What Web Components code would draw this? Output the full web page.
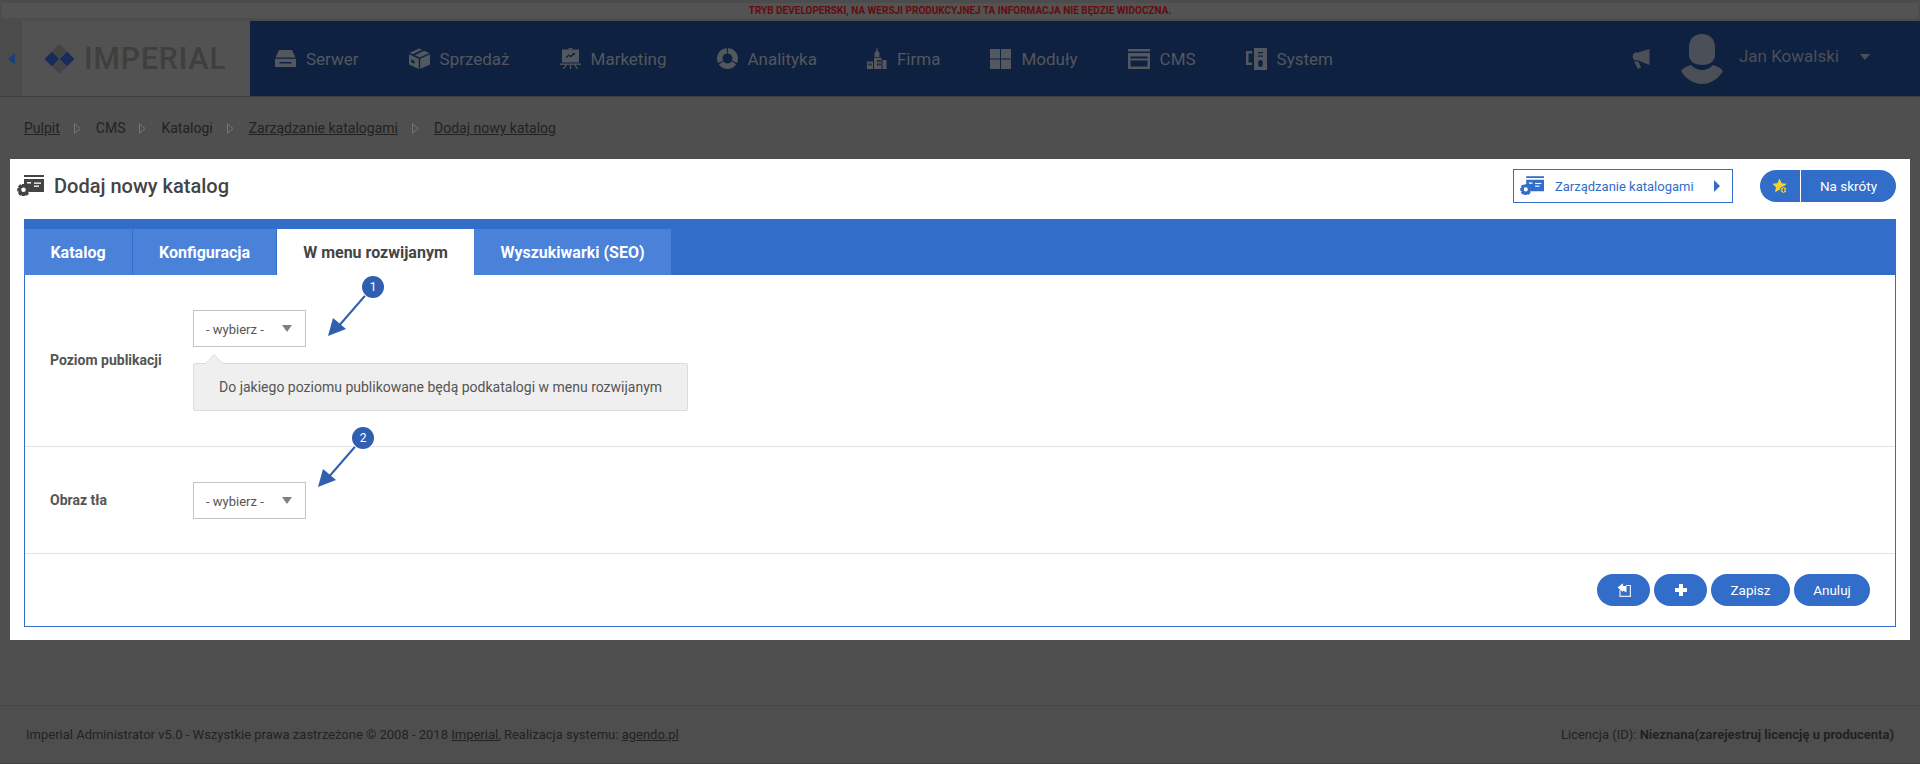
<!DOCTYPE html>
<html lang="pl">
<head>
<meta charset="utf-8">
<title>Imperial Administrator</title>
<style>
  html, body { margin: 0; height: 100%; }
  body {
    height: 764px;
    overflow: hidden;
    display: flex;
    flex-direction: column;
    background: #4f4f4f;
    font-family: Roboto, "Liberation Sans", sans-serif;
  }
</style>
</head>
<body>
  <dev-notice>Tryb developerski, na wersji produkcyjnej ta informacja nie będzie widoczna.</dev-notice>
  <app-header></app-header>
  <app-breadcrumbs></app-breadcrumbs>
  <catalog-panel></catalog-panel>
  <app-footer></app-footer>

<script>
const colors = {
  blue: "#316dc9",
  tab: "#4a81d9",
  navy: "#0f2140",
  navText: "#53575e",
  userText: "#4b4f57",
  text: "#444"
};

// catalog icon is used both in the title and in the link button
const catalogIcon = `
  <svg viewBox="0 0 27 24" width="27" height="24" fill="currentColor">
    <rect x="7" y="1" width="20" height="2"/>
    <path d="M7 5h20v13H12.500a6 6 0 0 0-5.500-5.500z"/>
    <rect x="10" y="8" width="4" height="1.500" fill="#fff"/>
    <rect x="17" y="8.500" width="7" height="1.300" fill="#fff"/>
    <rect x="17" y="11.500" width="5" height="1.300" fill="#fff"/>
    <path fill-rule="evenodd" d="M5 13h3l.4 1.700 1.500-.9 2.100 2.100-.9 1.500 1.700.4v3l-1.700.4.900 1.500-2.100 2.100-1.500-.9-.4 1.100H5l-.4-1.100-1.500.9L1 22.200l.9-1.500L.2 20.300v-3l1.700-.4-.9-1.500 2.100-2.100 1.500.9zM6.500 16.500a2.300 2.300 0 1 0 0 4.600 2.300 2.300 0 0 0 0-4.600z" transform="translate(0 -3)"/>
  </svg>`;

const navIcons = {
  server: `<svg viewBox="0 0 21 17" width="21" height="17" fill="currentColor">
    <path d="M4 0h13l3.500 7.500H.5z"/>
    <path fill-rule="evenodd" d="M0 8.700h21V17H0zM4.500 12v1.500h12V12z"/></svg>`,
  box: `<svg viewBox="0 0 21 21" width="21" height="21" fill="currentColor">
    <path d="M10 .5l3 1.300-9.200 4.500L.5 4.800z"/>
    <path d="M15 2.700l5.500 2.300-9.700 4.500-5-2.300z"/>
    <path fill-rule="evenodd" d="M0 6.200l9.800 4.500V21L0 16.500zM2.300 11.500v2.700l3.200 1.500V13z"/>
    <path d="M21 6.200v10.300L11.200 21V10.700z"/></svg>`,
  board: `<svg viewBox="0 0 21 21" width="21" height="21" fill="currentColor">
    <rect x="8.500" y="0" width="4" height="1.500"/>
    <path fill-rule="evenodd" d="M2 1.500h17V14.500H2zM5.500 9.500l.8.8 2.400-2.200 2 1.500 3.500-3 .8.800V5h-3l.9.800-2.300 2-2-1.500z"/>
    <rect x="0" y="15.500" width="21" height="1.400"/>
    <path d="M9.900 16.900h1.200V21H9.900zM5.500 16.900h1.500L4 21H2.500zM14 16.900h1.500l3 4.100H17z"/></svg>`,
  chart: `<svg viewBox="0 0 21 21" width="21" height="21">
    <circle cx="10.500" cy="10.500" r="7.700" fill="none" stroke="currentColor" stroke-width="5.600"
      pathLength="100" stroke-dasharray="31 2.300" transform="rotate(-86 10.500 10.500)"/></svg>`,
  city: `<svg viewBox="0 0 20 21" width="20" height="21" fill="currentColor">
    <path d="M9.600 0h.8l.4 3 1.700 2v4h-5V5l1.700-2z"/>
    <path fill-rule="evenodd" d="M7 9.800h7.500V21H7zM10 12v2h1.500v-2zM12.200 12v2h1.500v-2zM10 15.500v2h1.500v-2zM12.200 15.500v2h1.500v-2z"/>
    <path fill-rule="evenodd" d="M0 13.500h6V21H0zM1.500 15.500v2h1.300v-2zM3.500 15.500v2h1.300v-2z"/>
    <rect x="15.500" y="12" width="4" height="9"/></svg>`,
  grid: `<svg viewBox="0 0 21 20" width="21" height="20" fill="currentColor">
    <rect x="0" y="0" width="10" height="9.500"/><rect x="11" y="0" width="10" height="9.500"/>
    <rect x="0" y="10.500" width="10" height="9.500"/><rect x="11" y="10.500" width="10" height="9.500"/></svg>`,
  cms: `<svg viewBox="0 0 22 20" width="22" height="20" fill="currentColor">
    <rect x="0" y="0" width="22" height="2.500"/>
    <path fill-rule="evenodd" d="M0 4h22v16H0zM2.500 7.500v2h17v-2zM2.500 11.500v6h17v-6z"/></svg>`,
  system: `<svg viewBox="0 0 21 22" width="21" height="22" fill="currentColor">
    <path d="M0 3h6v2.500H2.500v9H6V17H0z"/>
    <path fill-rule="evenodd" d="M8 0h13v22H8zM12 4v1.300h5V4zM12 7.500v1.300h5V7.500zM14.500 12a2.300 2.300 0 0 0-2.300 2.300v2.400a2.300 2.300 0 0 0 4.600 0v-2.400a2.300 2.300 0 0 0-2.300-2.300z"/></svg>`
};

class DevNotice extends HTMLElement {
  constructor() {
    super();
    this.attachShadow({ mode: "open" }).innerHTML = /*html*/ `
    <style>
      :host { display: block; height: 21px; box-sizing: border-box; padding: 3px 2px 3px 2px; background: #4c4c4c; }
      div {
        height: 15px; background: #535353; text-align: center;
        font: 700 10px/15px Roboto, sans-serif; color: #650d0d; text-transform: uppercase;
      }
    </style>
    <div><slot></slot></div>`;
  }
}

class NavItem extends HTMLElement {
  constructor() {
    super();
    this.attachShadow({ mode: "open" }).innerHTML = /*html*/ `
    <style>
      :host { display: flex; align-items: center; gap: 10px; font-size: 17px; color: ${colors.navText}; }
      svg { display: block; }
    </style>
    ${navIcons[this.getAttribute("icon")]}
    <slot></slot>`;
  }
}

class AppHeader extends HTMLElement {
  constructor() {
    super();
    this.attachShadow({ mode: "open" }).innerHTML = /*html*/ `
    <style>
      :host { display: flex; height: 75px; background: ${colors.navy}; border-bottom: 1px solid #3c3c3c; box-sizing: content-box; }
      .toggle { width: 22px; background: #4b4b4b; display: flex; align-items: center; justify-content: center; }
      .toggle i { border: solid transparent; border-width: 6px 7px 6px 0; border-right-color: #1c3f78; }
      .logo {
        width: 228px; background: #525252; display: flex; align-items: center; gap: 9px; padding-left: 22px; box-sizing: border-box;
        font: 500 31px/1 Roboto, sans-serif; color: #3f3f3d; letter-spacing: 1px;
      }
      .logo svg { display: block; }
      .logo span { transform: scaleX(.97); transform-origin: left center; }
      nav { flex: 1; display: flex; align-items: center; gap: 50px; padding-left: 25px; }
      .user { display: flex; align-items: center; padding-right: 50px; color: ${colors.userText}; font-size: 17px; }
      .user .mega { margin-right: 31px; display: block; margin-top: 2px; }
      .user .avatar { margin-right: 16px; display: block; }
      .user .name { margin-top: -5px; }
      .user i { margin: -4px 0 0 21px; border: solid transparent; border-width: 6px 5px 0 5px; border-top-color: ${colors.userText}; }
    </style>
    <div class="toggle"><i></i></div>
    <div class="logo">
      <svg viewBox="0 0 31 30" width="31" height="30">
        <path d="M8 7.500l7.300 7.500L8 22.500.5 15z" fill="#172c58"/>
        <path d="M23 7.500l7.500 7.500-7.500 7.500-7.300-7.500z" fill="#172c58"/>
        <path d="M15.500 0l7.300 7.300-7.300 7.300-7.300-7.300z" fill="#444"/>
        <path d="M15.500 15.400l7.300 7.300-7.300 7.300-7.300-7.300z" fill="#444"/>
      </svg>
      <span>IMPERIAL</span>
    </div>
    <nav>
      <nav-item icon="server">Serwer</nav-item>
      <nav-item icon="box">Sprzedaż</nav-item>
      <nav-item icon="board">Marketing</nav-item>
      <nav-item icon="chart">Analityka</nav-item>
      <nav-item icon="city">Firma</nav-item>
      <nav-item icon="grid">Moduły</nav-item>
      <nav-item icon="cms">CMS</nav-item>
      <nav-item icon="system">System</nav-item>
    </nav>
    <div class="user">
      <svg class="mega" viewBox="0 0 21 21" width="21" height="21" fill="${colors.userText}">
        <path d="M20.500 0v16L9 11.500H6A4.500 4.500 0 0 1 6 3.500h3z"/>
        <path d="M5 12.500h4.500l2.500 6-3 1.500z"/>
      </svg>
      <svg class="avatar" viewBox="0 0 42 50" width="42" height="50" fill="${colors.userText}">
        <path d="M21 0c7.500 0 13 5 13 13v8c0 6-5 10-13 10s-13-4-13-10v-8C8 5 13.500 0 21 0z"/>
        <path d="M10 31c3 3.500 7 5 11 5s8-1.500 11-5c4 1 8 3 10 6-4.500 7.500-12 13-21 13S4.500 44.500 0 37c2-3 6-5 10-6z"/>
      </svg>
      <span class="name">Jan Kowalski</span>
      <i></i>
    </div>`;
  }
}

class AppBreadcrumbs extends HTMLElement {
  constructor() {
    super();
    const items = [
      ["Pulpit", true], ["CMS", false], ["Katalogi", false],
      ["Zarządzanie katalogami", true], ["Dodaj nowy katalog", true]
    ];
    this.attachShadow({ mode: "open" }).innerHTML = /*html*/ `
    <style>
      :host { display: flex; align-items: center; height: 62px; padding-left: 24px; font-size: 14px; color: #222; }
      a { color: inherit; text-decoration: underline; }
      i { margin: 0 15px 0 14px; width: 7px; height: 11px; }
      i svg { display: block; }
    </style>
    ${items.map(([label, link], idx) => `
      ${idx ? `<i><svg viewBox="0 0 7 11" width="7" height="11"><path d="M.5.800L6.200 5.500.5 10.200z" fill="none" stroke="#757575"/></svg></i>` : ""}
      ${link ? `<a>${label}</a>` : `<span>${label}</span>`}
    `).join("")}`;
  }
}

class SelectBox extends HTMLElement {
  constructor() {
    super();
    this.attachShadow({ mode: "open" }).innerHTML = /*html*/ `
    <style>
      :host {
        display: flex; align-items: center; justify-content: space-between;
        width: 113px; height: 37px; box-sizing: border-box; padding: 0 13px 0 12px;
        border: 1px solid #c4c4c4; background: #fff; font-size: 13px; color: #555;
      }
      span { margin-top: 2px; }
      i { border: solid transparent; border-width: 7px 5.500px 0 5.500px; border-top-color: #808080; margin-top: -1px; }
    </style>
    <span><slot></slot></span><i></i>`;
  }
}

class HintBox extends HTMLElement {
  constructor() {
    super();
    this.attachShadow({ mode: "open" }).innerHTML = /*html*/ `
    <style>
      :host {
        display: block; position: relative; width: 495px; height: 48px; box-sizing: border-box;
        margin-top: 16px; padding: 0 25px; line-height: 46px;
        background: #efefef; border: 1px solid #dcdcdc; border-radius: 2px;
        font-size: 14px; color: #555; white-space: nowrap;
      }
      svg { position: absolute; left: 11px; top: -10px; display: block; }
    </style>
    <svg viewBox="0 0 18 10" width="18" height="10"><path d="M0 10L9 .5 18 10" fill="#efefef" stroke="#dcdcdc"/></svg>
    <slot></slot>`;
  }
}

class FormRow extends HTMLElement {
  constructor() {
    super();
    this.attachShadow({ mode: "open" }).innerHTML = /*html*/ `
    <style>
      :host {
        display: flex; align-items: center; padding: 35px 25px 35px 25px;
        border-bottom: 1px solid #e2e2e2;
      }
      :host([compact]) { padding-bottom: 34px; }
      .label { width: 143px; flex: none; margin-top: -2px; font-size: 14px; font-weight: 700; color: #555; }
    </style>
    <div class="label">${this.getAttribute("label")}</div>
    <div class="field"><slot></slot></div>`;
  }
}

// numbered badge with an arrow drawn over the form, its place is its content
class CalloutArrow extends HTMLElement {
  constructor() {
    super();
    this.attachShadow({ mode: "open" }).innerHTML = /*html*/ `
    <style>
      :host {
        position: absolute; display: block; width: 60px; height: 64px;
        left: ${this.getAttribute("x")}px; top: ${this.getAttribute("y")}px;
      }
      svg { display: block; }
      span {
        position: absolute; right: 1px; top: 0; width: 22px; height: 22px; border-radius: 50%;
        background: #2f5fae; color: #fff; font-size: 12px; line-height: 22px; text-align: center;
        box-shadow: 0 0 0 1px #fff;
      }
    </style>
    <svg viewBox="0 0 60 64" width="60" height="64">
      <path d="M45 14L12 52" stroke="#2f5fae" stroke-width="2"/>
      <path d="M3 60L8 42 21 53z" fill="#2f5fae"/>
    </svg>
    <span><slot></slot></span>`;
  }
}

class PillButton extends HTMLElement {
  constructor() {
    super();
    this.attachShadow({ mode: "open" }).innerHTML = /*html*/ `
    <style>
      :host {
        display: flex; align-items: center; justify-content: center;
        height: 32px; border-radius: 16px; background: ${colors.blue};
        color: #fff; font-size: 13.500px; box-sizing: border-box;
      }
    </style>
    <slot></slot>`;
  }
}

class CatalogPanel extends HTMLElement {
  constructor() {
    super();
    this.attachShadow({ mode: "open" }).innerHTML = /*html*/ `
    <style>
      :host { display: block; margin: 0 10px; height: 481px; background: #fff; box-sizing: border-box; padding: 0 14px 13px; }
      .head { display: flex; align-items: center; height: 60px; padding-bottom: 6px; box-sizing: border-box; color: ${colors.text}; margin-left: -7px; }
      .head h1 { margin: 0 0 0 10px; font-size: 20px; font-weight: 500; flex: 1; }
      .head svg { display: block; }
      .link {
        display: flex; align-items: center; width: 220px; height: 34px; box-sizing: border-box;
        border: 1px solid ${colors.blue}; color: ${colors.blue}; font-size: 13px; padding-left: 6px; margin-right: 27px;
      }
      .link svg { width: 24px; height: 22px; }
      .link span { margin-left: 11px; flex: 1; }
      .link i { border: solid transparent; border-width: 6px 0 6px 6px; border-left-color: ${colors.blue}; margin-right: 12px; }
      .shortcut {
        display: flex; align-items: center; width: 136px; height: 32px; border-radius: 16px;
        background: ${colors.blue}; color: #fff; font-size: 13.500px; overflow: hidden;
      }
      .shortcut .star { width: 40px; height: 100%; display: flex; align-items: center; justify-content: center; border-right: 1px solid #fff; box-sizing: content-box; }
      .shortcut .lab { flex: 1; text-align: center; padding-left: 3px; padding-right: 3px; }
      .box { position: relative; height: 408px; box-sizing: border-box; border: 1px solid ${colors.blue}; }
      .tabs { display: flex; height: 56px; margin: -1px -1px 0; padding-top: 10px; box-sizing: border-box; background: ${colors.blue}; padding-left: 0; }
      .tabs a {
        display: flex; align-items: center; justify-content: center; height: 46px;
        background: ${colors.tab}; color: #fff; font-size: 16px; font-weight: 700; box-sizing: border-box;
        border-right: 1px solid ${colors.blue};
      }
      .tabs a.on { background: #fff; color: ${colors.text}; border-right: 0; }
      .actions { display: flex; justify-content: flex-end; gap: 4px; padding: 20px 25px 0 0; }
    </style>
    <div class="head">
      ${catalogIcon}
      <h1>Dodaj nowy katalog</h1>
      <div class="link">${catalogIcon}<span>Zarządzanie katalogami</span><i></i></div>
      <div class="shortcut">
        <div class="star">
          <svg viewBox="0 0 16 16" width="16" height="16">
            <path d="M7.500.500l2.200 4.700 5 .6-3.700 3.500 1 5-4.500-2.500L3 14.300l1-5L.3 5.800l5-.6z" fill="#f5d327"/>
            <circle cx="11.500" cy="12" r="3.300" fill="#f5d327" stroke="${colors.blue}"/>
            <path d="M11.500 10v4M9.500 12h4" stroke="${colors.blue}"/>
          </svg>
        </div>
        <div class="lab">Na skróty</div>
      </div>
    </div>
    <div class="box">
      <div class="tabs">
        <a style="width:109px">Katalog</a>
        <a style="width:144px">Konfiguracja</a>
        <a class="on" style="width:197px">W menu rozwijanym</a>
        <a style="width:197px;border-right:0">Wyszukiwarki (SEO)</a>
      </div>
      <form-row label="Poziom publikacji">
        <select-box>- wybierz -</select-box>
        <hint-box>Do jakiego poziomu publikowane będą podkatalogi w menu rozwijanym</hint-box>
      </form-row>
      <form-row label="Obraz tła" compact>
        <select-box>- wybierz -</select-box>
      </form-row>
      <div class="actions">
        <pill-button style="width:53px">
          <svg viewBox="0 0 14 14" width="14" height="14">
            <path d="M3 7v6.400h10.400V2.500H9" fill="none" stroke="#e4e8f8" stroke-width="1.200"/>
            <path d="M.5 4.500L6 .2v2.800h3.500V9.500L6 7.500V9z" fill="#fff"/>
          </svg>
        </pill-button>
        <pill-button style="width:53px">
          <svg viewBox="0 0 14 14" width="14" height="14"><path d="M5 1h4v4h4v4H9v4H5V9H1V5h4z" fill="#fff"/></svg>
        </pill-button>
        <pill-button style="width:79px">Zapisz</pill-button>
        <pill-button style="width:76px">Anuluj</pill-button>
      </div>
      <callout-arrow x="300" y="56">1</callout-arrow>
      <callout-arrow x="290" y="207">2</callout-arrow>
    </div>`;
  }
}

class AppFooter extends HTMLElement {
  constructor() {
    super();
    this.attachShadow({ mode: "open" }).innerHTML = /*html*/ `
    <style>
      :host {
        display: flex; align-items: center; justify-content: space-between;
        margin-top: auto; height: 59px; box-sizing: border-box; padding: 0 26px 0 26px;
        border-top: 1px solid #474747; border-bottom: 1px solid #404040;
        font-size: 13px; color: #222; background: #4e4e4e;
      }
      a { color: inherit; text-decoration: underline; }
      b { font-weight: 700; }
    </style>
    <div>Imperial Administrator v5.0 - Wszystkie prawa zastrzeżone © 2008 - 2018 <a>Imperial</a>, Realizacja systemu: <a>agendo.pl</a></div>
    <div>Licencja (ID): <b>Nieznana(zarejestruj licencję u producenta)</b></div>`;
  }
}

customElements.define("dev-notice", DevNotice);
customElements.define("nav-item", NavItem);
customElements.define("app-header", AppHeader);
customElements.define("app-breadcrumbs", AppBreadcrumbs);
customElements.define("select-box", SelectBox);
customElements.define("hint-box", HintBox);
customElements.define("form-row", FormRow);
customElements.define("callout-arrow", CalloutArrow);
customElements.define("pill-button", PillButton);
customElements.define("catalog-panel", CatalogPanel);
customElements.define("app-footer", AppFooter);
</script>
</body>
</html>
